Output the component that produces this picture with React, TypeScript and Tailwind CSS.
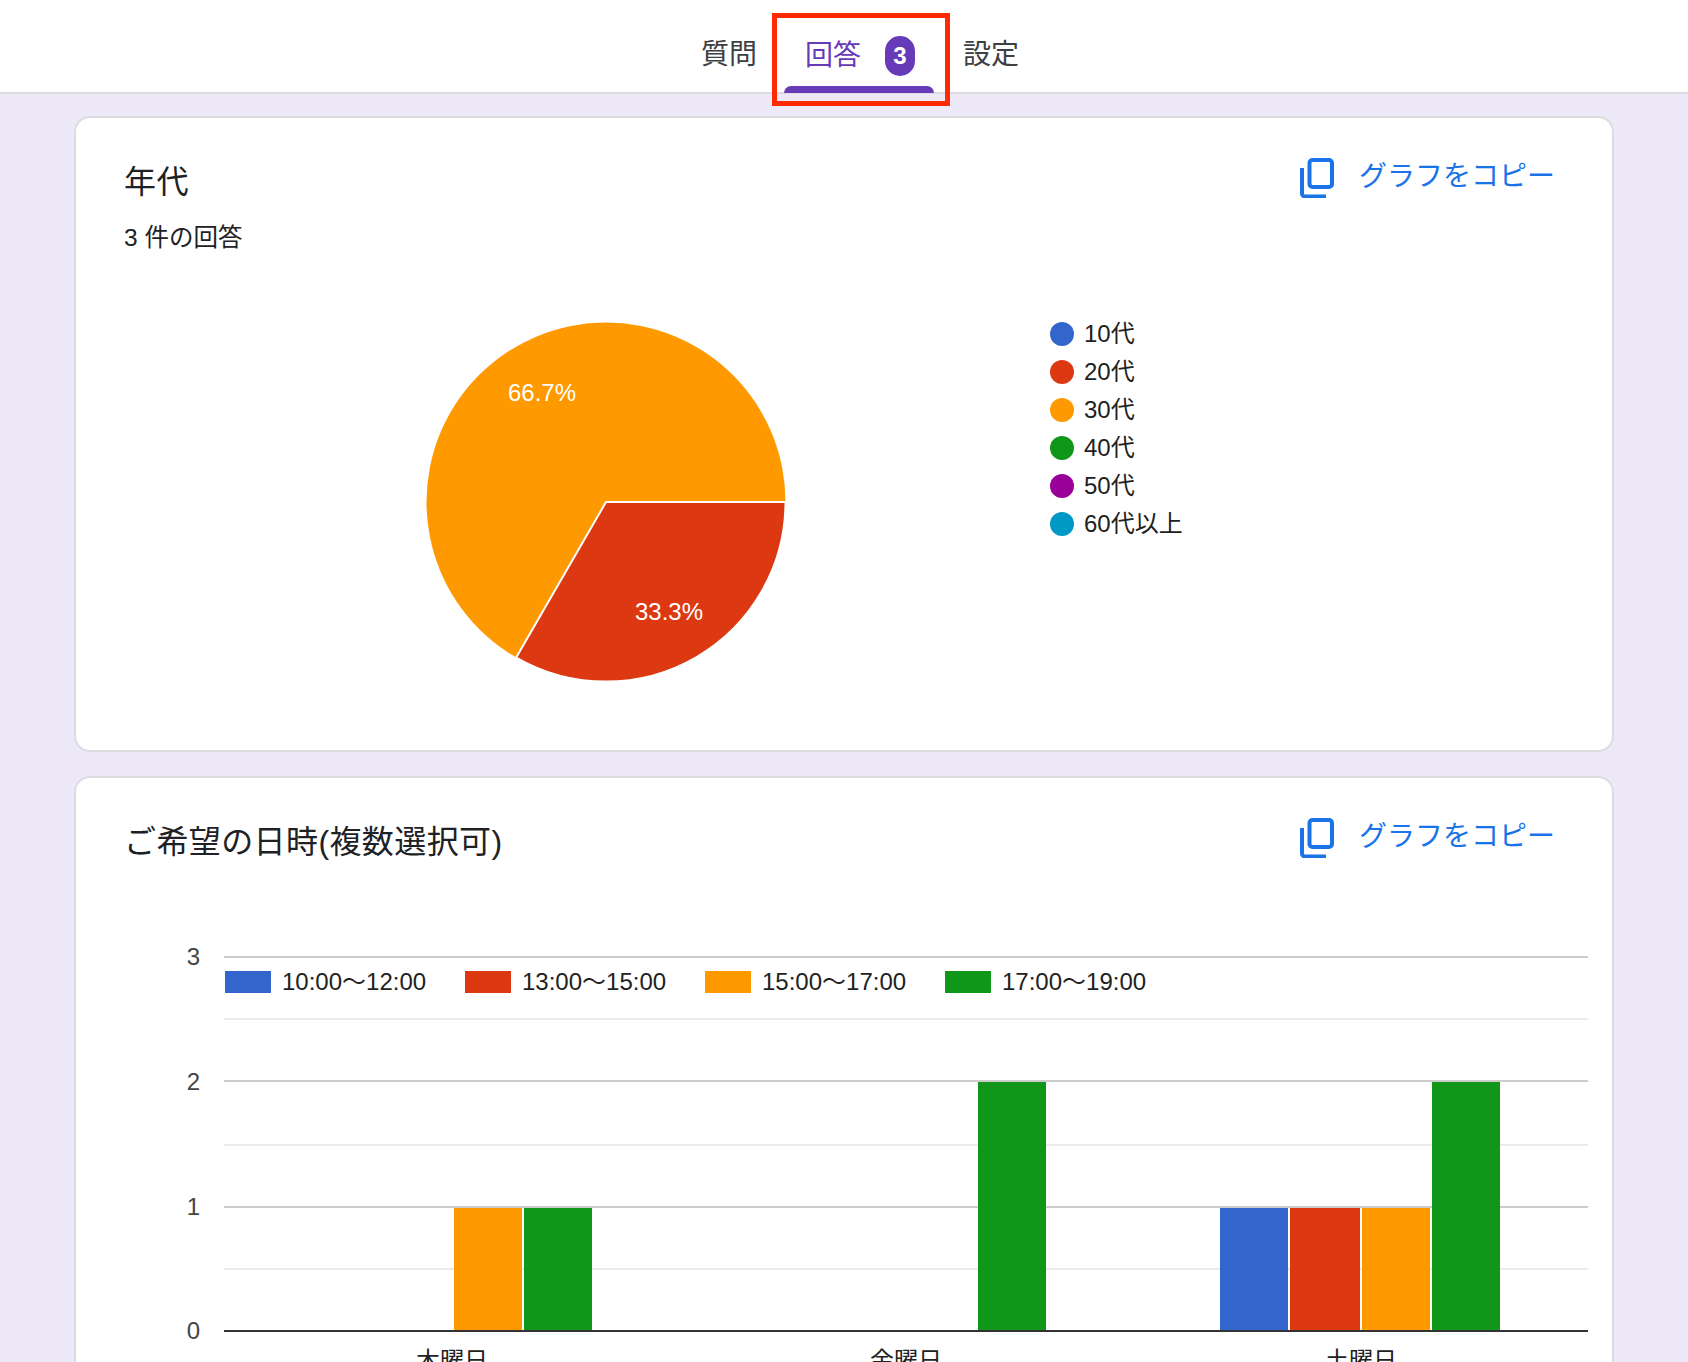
const FONT = '"Liberation Sans","Noto Sans CJK JP",sans-serif';
const BLUE = '#3366cc', RED = '#dc3912', ORANGE = '#ff9900', GREEN = '#109618', PURPLE = '#990099', CYAN = '#0099c6';

function CopyIcon() {
  return (
    <svg width="34" height="40" viewBox="0 0 34 40" fill="none" className="mt-[4px]">
      <rect x="9.5" y="2" width="22.5" height="27" rx="3" stroke="#1a73e8" strokeWidth="4" />
      <path d="M2 10V35.5a3 3 0 0 0 3 3H26" stroke="#1a73e8" strokeWidth="4" />
    </svg>
  );
}

function CardHeader({ title }: { title: string }) {
  return (
    <div className="flex justify-between items-start pl-[48px] pr-[57px]">
      <h2 className="text-[32px] leading-[40px] font-normal tracking-[0.4px] text-[#202124] mt-[10px]">{title}</h2>
      <div className="flex items-center gap-[25px] mt-[2px] text-[28px] leading-[40px] text-[#1a73e8]">
        <CopyIcon />
        <span className="pt-[2px]">グラフをコピー</span>
      </div>
    </div>
  );
}

const legend: [string, string][] = [
  ['10代', BLUE], ['20代', RED], ['30代', ORANGE], ['40代', GREEN], ['50代', PURPLE], ['60代以上', CYAN],
];

function Pie() {
  return (
    <svg width="360" height="360" viewBox="426 322 360 360" className="shrink-0">
      <circle cx="606" cy="502" r="179.5" fill={ORANGE} />
      <path d="M606 502H785.5A179.5 179.5 0 0 1 516.2 657.5Z" fill={RED} stroke="#fff" strokeWidth="2" />
      <text x="542" y="392" fill="#fff" fontSize="24" textAnchor="middle" dominantBaseline="central">66.7%</text>
      <text x="669" y="611" fill="#fff" fontSize="24" textAnchor="middle" dominantBaseline="central">33.3%</text>
    </svg>
  );
}

const bars: [number, number, number, string][] = [
  [454, 522, 1208, ORANGE], [524, 592, 1208, GREEN], [978, 1046, 1082, GREEN],
  [1220, 1288, 1208, BLUE], [1290, 1360, 1208, RED], [1362, 1430, 1208, ORANGE], [1432, 1500, 1082, GREEN],
];
const chartLegend: [number, string, string][] = [
  [225, '10:00〜12:00', BLUE], [465, '13:00〜15:00', RED], [705, '15:00〜17:00', ORANGE], [945, '17:00〜19:00', GREEN],
];

function BarChart() {
  return (
    <svg width="1460" height="440" viewBox="150 930 1460 440" className="block ml-[74px]" fontSize="24">
      {[957, 1081, 1207].map((y) => <rect key={y} x="224" y={y - 1} width="1364" height="2" fill="#cccccc" />)}
      {[1019, 1145, 1269].map((y) => <rect key={y} x="224" y={y - 1} width="1364" height="2" fill="#ebebeb" />)}
      {[[956, '3'], [1081, '2'], [1206, '1'], [1330, '0']].map(([y, t]) => (
        <text key={t} x="200" y={y} fill="#444444" textAnchor="end" dominantBaseline="central">{t}</text>
      ))}
      {bars.map(([a, b, y, c]) => <rect key={a} x={a} y={y} width={b - a} height={1330 - y} fill={c} />)}
      <rect x="224" y="1330" width="1364" height="2" fill="#333333" />
      {chartLegend.map(([x, t, c]) => (
        <g key={t}>
          <rect x={x} y="971" width="46" height="22" fill={c} />
          <text x={x + 57} y="981" fill="#222222" dominantBaseline="central">{t}</text>
        </g>
      ))}
      {[[452, '木曜日'], [906, '金曜日'], [1361, '土曜日']].map(([x, t]) => (
        <text key={t} x={x} y="1360" fill="#222222" textAnchor="middle" dominantBaseline="central">{t}</text>
      ))}
    </svg>
  );
}

export default function App() {
  return (
    <div className="h-[1362px] overflow-hidden bg-[#ede9f8]" style={{ fontFamily: FONT }}>
      <header className="relative h-[94px] bg-white border-b-2 border-[#dadce0] flex pl-[701px] text-[28px] text-[#3c4043]">
        <div className="h-full flex items-center pt-[18px]">質問</div>
        <div className="relative h-[94px] ml-[27px] w-[150px] pl-[21px] flex items-center gap-[24px] text-[#673ab7]">
          <span className="pt-[18px]">回答</span>
          <span className="w-[30px] h-[40px] mt-[18px] rounded-full bg-[#673ab7] text-white text-[24px] font-bold flex items-center justify-center">3</span>
          <div className="absolute left-0 right-0 top-[86px] h-[7px] rounded-t-[8px] bg-[#673ab7]" />
        </div>
        <div className="h-full flex items-center pt-[18px] ml-[29px]">設定</div>
        <div className="absolute left-[772px] top-[13px] w-[178px] h-[93px] border-[5px] border-[#ff2a00]" />
      </header>

      <main className="ml-[74px] w-[1540px] pt-[22px] flex flex-col gap-[24px]">
        <section className="h-[636px] bg-white border-2 border-[#dadce0] rounded-[16px] pt-[34px]">
          <CardHeader title="年代" />
          <p className="pl-[48px] mt-[20px] text-[24.5px] leading-[32px] text-[#202124]">3 件の回答</p>
          <div className="flex mt-[68px] pl-[350px]">
            <Pie />
            <ul className="ml-[264px] mt-[-7px] flex flex-col text-[24px] text-[#212121]">
              {legend.map(([t, c]) => (
                <li key={t} className="h-[38px] flex items-center gap-[10px]">
                  <span className="w-[24px] h-[24px] rounded-full" style={{ backgroundColor: c }} />
                  <span>{t}</span>
                </li>
              ))}
            </ul>
          </div>
        </section>
        <section className="h-[700px] bg-white border-2 border-[#dadce0] rounded-[16px] pt-[34px]">
          <CardHeader title="ご希望の日時(複数選択可)" />
          <div className="mt-[68px]"><BarChart /></div>
        </section>
      </main>
    </div>
  );
}
